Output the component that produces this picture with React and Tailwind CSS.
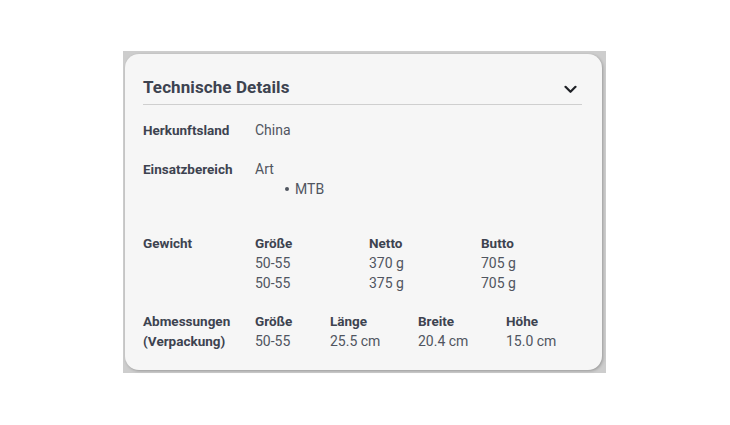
import React from 'react';

const Label = ({ children }) => (
  <div className="text-[13.5px] font-bold text-[#3d4350] leading-5">{children}</div>
);

const Val = ({ children }) => (
  <div className="text-[14px] text-[#50555f] leading-5">{children}</div>
);

export default function App() {
  return (
    <div className="w-[730px] h-[425px] bg-white font-['Roboto',sans-serif] relative">
      <div className="absolute left-[123px] top-[51px] w-[483px] h-[322px] bg-[#cdcdcd] pt-[3px] pl-[2px] pr-[4px] pb-[3px]">
        <div className="h-full bg-[#f6f6f6] rounded-[14px] shadow-[1px_1px_3px_rgba(0,0,0,0.25)] pl-[18px] pr-[20px] pt-[23px]">
          <div className="flex items-center justify-between h-[22px]">
            <h2 className="text-[17px] font-bold text-[#3d4350] tracking-[0.1px]">Technische Details</h2>
            <svg width="13" height="9" viewBox="0 0 13 9" className="mr-[5px] mt-[2px]">
              <path d="M1.5 1.8 L6.5 6.8 L11.5 1.8" fill="none" stroke="#1f2126" strokeWidth="2.2" strokeLinecap="round" strokeLinejoin="round" />
            </svg>
          </div>
          <div className="h-px bg-[#cfcfcf] mt-[5px]" />

          <div className="mt-[15px] flex flex-col gap-[19px]">
            <div className="grid grid-cols-[112px_1fr]">
              <Label>Herkunftsland</Label>
              <Val>China</Val>
            </div>

            <div className="grid grid-cols-[112px_1fr] mb-[15px]">
              <Label>Einsatzbereich</Label>
              <div>
                <Val>Art</Val>
                <ul className="pl-[40px] list-none">
                  <li className="flex items-center text-[14px] text-[#50555f] leading-5">
                    <span className="w-[4px] h-[4px] rounded-full bg-[#50555f] mr-[6px] ml-[-10px]" />
                    MTB
                  </li>
                </ul>
              </div>
            </div>

            <div className="grid grid-cols-[112px_114px_112px_1fr]">
              <Label>Gewicht</Label>
              <div>
                <Label>Größe</Label>
                <Val>50-55</Val>
                <Val>50-55</Val>
              </div>
              <div>
                <Label>Netto</Label>
                <Val>370 g</Val>
                <Val>375 g</Val>
              </div>
              <div>
                <Label>Butto</Label>
                <Val>705 g</Val>
                <Val>705 g</Val>
              </div>
            </div>

            <div className="grid grid-cols-[112px_75px_88px_88px_1fr] -mt-px">
              <div>
                <Label>Abmessungen</Label>
                <Label>(Verpackung)</Label>
              </div>
              <div>
                <Label>Größe</Label>
                <Val>50-55</Val>
              </div>
              <div>
                <Label>Länge</Label>
                <Val>25.5 cm</Val>
              </div>
              <div>
                <Label>Breite</Label>
                <Val>20.4 cm</Val>
              </div>
              <div>
                <Label>Höhe</Label>
                <Val>15.0 cm</Val>
              </div>
            </div>
          </div>
        </div>
      </div>
    </div>
  );
}
